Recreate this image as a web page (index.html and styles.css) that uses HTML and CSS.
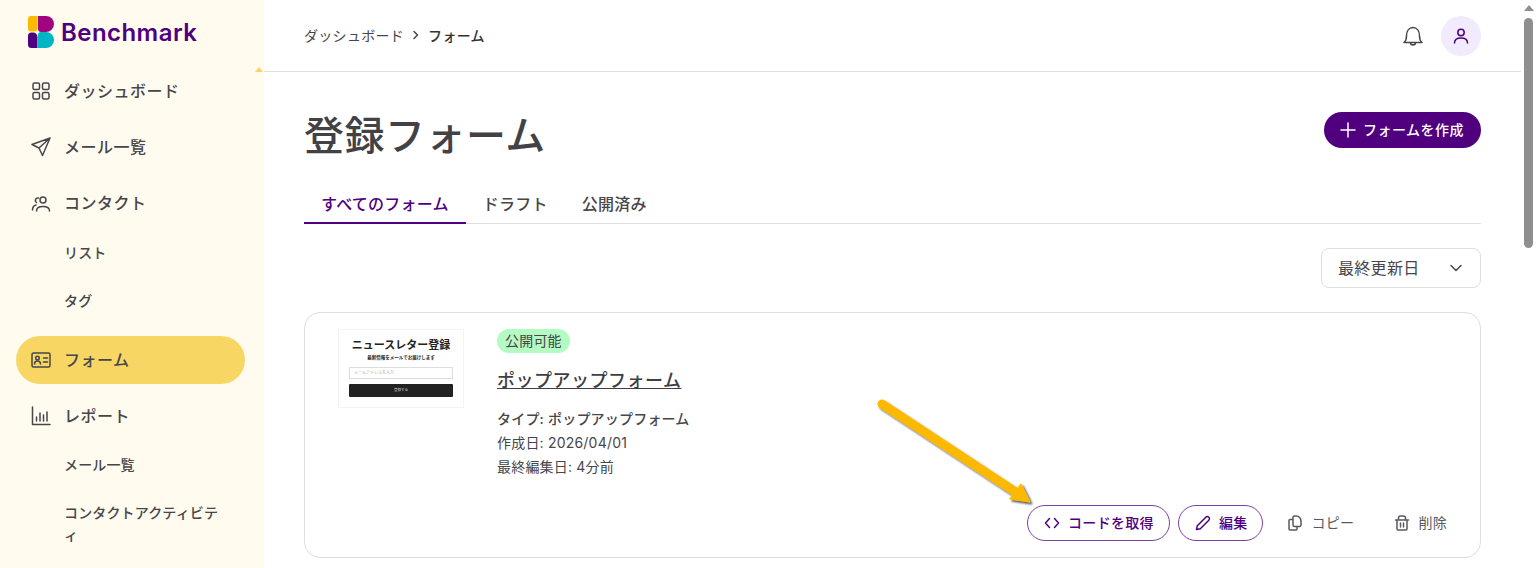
FILE: index.html
```html
<!DOCTYPE html>
<html lang="ja">
<head>
    <meta charset="UTF-8">
    <meta name="viewport" content="width=device-width, initial-scale=1.0">
    <title>登録フォーム</title>
    <link rel="stylesheet" href="styles.css">
</head>
<body>
    <div class="app">
        <aside class="sidebar">
            <div class="logo">
                <svg class="logo-mark" width="26" height="32" viewBox="0 0 26 32">
                    <path d="M0 3a3 3 0 0 1 3-3h6.500v12a3.500 3.500 0 0 1-3.500 3.500H3a3 3 0 0 1-3-3z" fill="#fdb900"/>
                    <path d="M10 0h8a8 8 0 0 1 0 16h-5a3 3 0 0 1-3-3z" fill="#a0047f"/>
                    <path d="M0 20a3.500 3.500 0 0 1 3.500-3.500h1.500a4.500 4.500 0 0 1 4.500 4.500v11H3.500A3.500 3.500 0 0 1 0 28.500z" fill="#50007f"/>
                    <path d="M13 16h5a8 8 0 0 1 0 16h-8V19a3 3 0 0 1 3-3z" fill="#00b5c4"/>
                </svg>
                <span class="logo-text">Benchmark</span>
            </div>
            <span class="sidebar-notch"></span>
            <nav class="nav">
                <a class="nav-item">
                    <svg class="icon" viewBox="0 0 20 20"><rect x="2" y="2" width="6.500" height="6.500" rx="1.500"/><rect x="11.500" y="2" width="6.500" height="6.500" rx="1.500"/><rect x="2" y="11.500" width="6.500" height="6.500" rx="1.500"/><rect x="11.500" y="11.500" width="6.500" height="6.500" rx="1.500"/></svg>
                    ダッシュボード
                </a>
                <a class="nav-item">
                    <svg class="icon" viewBox="0 0 20 20"><path d="M19 1 1 7.500l7 3.500 3.500 7.500zM19 1 8 11"/></svg>
                    メール一覧
                </a>
                <a class="nav-item">
                    <svg class="icon" viewBox="0 0 20 20"><circle cx="12" cy="7" r="3"/><path d="M5.500 18c0-3 2.500-4.500 6.500-4.500s6.500 1.500 6.500 4.500M7.500 5a2.500 2.500 0 0 0-2 4.500M1.500 17c0-3 1.500-4.500 3.500-5"/></svg>
                    コンタクト
                </a>
                <a class="nav-sub">リスト</a>
                <a class="nav-sub">タグ</a>
                <a class="nav-item nav-active">
                    <svg class="icon" viewBox="0 0 20 20"><rect x="1" y="3" width="18" height="14" rx="1.500"/><circle cx="6.500" cy="8" r="1.800"/><path d="M3.500 14c0-2 1.300-3 3-3s3 1 3 3M12.500 8h4M12.500 12h4"/></svg>
                    フォーム
                </a>
                <a class="nav-item">
                    <svg class="icon" viewBox="0 0 20 20"><path d="M1.500 1v17.500h17.500M5.500 15v-4M9 15V7M12.500 15v-6M16 15V6"/></svg>
                    レポート
                </a>
                <a class="nav-sub">メール一覧</a>
                <a class="nav-sub">コンタクトアクティビティ</a>
            </nav>
        </aside>

        <main class="main">
            <header class="topbar">
                <div class="crumbs">
                    <span>ダッシュボード</span>
                    <svg class="crumb-sep" viewBox="0 0 8 10"><path d="M2 1.500 5.500 5 2 8.500"/></svg>
                    <b>フォーム</b>
                </div>
                <div class="top-actions">
                    <svg class="bell" viewBox="0 0 24 24"><path d="M3 18.500c2-1.500 2.500-3 2.500-6.500 0-5 2.500-8.500 6.500-8.500s6.500 3.500 6.500 8.500c0 3.500.5 5 2.500 6.500zM9.500 18.500a2.500 2.500 0 0 0 5 0"/></svg>
                    <span class="avatar">
                        <svg viewBox="0 0 20 20"><circle cx="10" cy="6.500" r="3.200"/><path d="M3.500 17c0-3.500 3-5 6.500-5s6.500 1.500 6.500 5"/></svg>
                    </span>
                </div>
            </header>

            <section class="content">
                <div class="title-row">
                    <h1>登録フォーム</h1>
                    <button class="create-btn">
                        <svg viewBox="0 0 16 16"><path d="M8 1v14M1 8h14"/></svg>
                        フォームを作成
                    </button>
                </div>

                <div class="tabs">
                    <a class="tab tab-active">すべてのフォーム</a>
                    <a class="tab">ドラフト</a>
                    <a class="tab">公開済み</a>
                </div>

                <div class="sort-row">
                    <div class="sort-select">
                        最終更新日
                        <svg viewBox="0 0 14 14"><path d="M2 4.500 7 9.500l5-5"/></svg>
                    </div>
                </div>

                <article class="card">
                    <div class="card-top">
                        <div class="thumb">
                            <div class="thumb-title">ニュースレター登録</div>
                            <div class="thumb-sub">最新情報をメールでお届けします</div>
                            <div class="thumb-input">メールアドレスを入力</div>
                            <div class="thumb-btn">登録する</div>
                        </div>
                        <div class="card-info">
                            <span class="badge">公開可能</span>
                            <a class="card-name">ポップアップフォーム</a>
                            <p class="meta meta-type">タイプ: ポップアップフォーム</p>
                            <p class="meta">作成日: 2026/04/01</p>
                            <p class="meta">最終編集日: 4分前</p>
                        </div>
                    </div>
                    <div class="card-actions">
                        <button class="btn-outline">
                            <svg viewBox="0 0 16 16"><path d="M5.500 3.500 1.500 8l4 4.500M10.500 3.500l4 4.500-4 4.500"/></svg>
                            コードを取得
                        </button>
                        <button class="btn-outline">
                            <svg viewBox="0 0 16 16"><path d="M1.500 14.500l.8-3.800 8.500-8.500a1.800 1.800 0 0 1 3 3l-8.500 8.500z"/></svg>
                            編集
                        </button>
                        <button class="btn-plain">
                            <svg viewBox="0 0 16 16"><path d="M6 4.500H3a1 1 0 0 0-1 1V14a1 1 0 0 0 1 1h6a1 1 0 0 0 1-1v-2.500M6 2.500a1.500 1.500 0 0 1 1.500-1.500h1.800c2.500 0 4.700 2.200 4.700 5v4a1.500 1.500 0 0 1-1.500 1.500H7.500A1.500 1.500 0 0 1 6 10z"/></svg>
                            コピー
                        </button>
                        <button class="btn-plain">
                            <svg viewBox="0 0 16 16"><path d="M1.500 5h13M3 5v9a1 1 0 0 0 1 1h8a1 1 0 0 0 1-1V5M4.500 5V3a2 2 0 0 1 2-2h3a2 2 0 0 1 2 2v2M6.500 8v4M9.500 8v4"/></svg>
                            削除
                        </button>
                    </div>
                </article>
            </section>
        </main>

        <div class="scrollbar">
            <span class="scroll-up"></span>
            <span class="scroll-thumb"></span>
        </div>

        <!-- annotation arrow on top of the screenshot -->
        <svg class="arrow" width="180" height="120" viewBox="0 0 180 120">
            <defs>
                <filter id="arrowShadow" x="-10%" y="-10%" width="125%" height="130%">
                    <feDropShadow dx="2" dy="2" stdDeviation="1.200" flood-color="#000" flood-opacity="0.7"/>
                </filter>
            </defs>
            <g filter="url(#arrowShadow)">
                <path d="M8 10 146 101" stroke="#fdb900" stroke-width="9" stroke-linecap="round" fill="none"/>
                <path d="M147 90 156 108 136 105z" fill="#fdb900" stroke="#fdb900" stroke-width="1" stroke-linejoin="round"/>
            </g>
        </svg>
    </div>
</body>
</html>
```

FILE: styles.css
```css
* {
    box-sizing: border-box;
}
html, body {
    margin: 0;
    padding: 0;
    height: 100%;
    overflow: hidden;
}
body {
    font-family: Inter, "Noto Sans CJK JP", "Noto Sans", sans-serif;
    color: #47464b;
    background-color: #fff;
}
p {
    margin: 0;
}
button {
    font-family: inherit;
    background: none;
    border: none;
    cursor: pointer;
}
svg {
    fill: none;
    stroke: currentColor;
    stroke-width: 1.500;
    stroke-linecap: round;
    stroke-linejoin: round;
    flex-shrink: 0;
}

.app {
    position: relative;
    display: flex;
    height: 568px;
    overflow: hidden;
}

/* Sidebar */
.sidebar {
    position: relative;
    width: 264px;
    flex-shrink: 0;
    background-color: #fffbef;
    padding: 16px 19px 0 16px;
}
.logo {
    display: flex;
    align-items: center;
    gap: 7px;
    height: 32px;
    padding-left: 12px;
}
.logo-mark {
    stroke: none;
}
.logo-text {
    font-size: 24px;
    font-weight: 600;
    letter-spacing: 0.450px;
    color: #50007f;
}
.sidebar-notch {
    position: absolute;
    top: 67px;
    left: 255px;
    border-left: 4px solid transparent;
    border-right: 4px solid transparent;
    border-bottom: 5px solid #f8d664;
}
.nav {
    display: flex;
    flex-direction: column;
    margin-top: 19px;
}
.nav-item {
    display: flex;
    align-items: center;
    gap: 13px;
    height: 48px;
    margin-bottom: 8px;
    padding: 0 0 2px 15px;
    border-radius: 24px;
    font-size: 16px;
    font-weight: 500;
    letter-spacing: 0.500px;
}
.nav-item .icon {
    width: 20px;
    height: 20px;
    margin-top: 2px;
}
.nav-active {
    background-color: #f8d664;
    margin-top: 11px;
}
.nav-sub {
    display: flex;
    align-items: center;
    min-height: 48px;
    padding: 13px 24px 13px 48px;
    font-size: 14px;
    font-weight: 500;
    letter-spacing: 0.150px;
    line-height: 22px;
}
.nav-item + .nav-sub {
    margin-top: -6px;
}
.nav-active + .nav-item + .nav-sub {
    margin-top: -7px;
}

/* Main column */
.main {
    flex: 1;
    min-width: 0;
}
.topbar {
    display: flex;
    align-items: center;
    justify-content: space-between;
    height: 72px;
    padding: 0 40px;
    border-bottom: 1px solid #dedede;
}
.crumbs {
    display: flex;
    align-items: center;
    gap: 8px;
    padding-bottom: 1px;
    font-size: 14px;
    letter-spacing: 0.300px;
}
.crumbs b {
    font-weight: 500;
    color: #333;
}
.crumb-sep {
    width: 8px;
    height: 10px;
}
.top-actions {
    display: flex;
    align-items: center;
    gap: 16px;
}
.bell {
    width: 24px;
    height: 24px;
}
.avatar {
    display: flex;
    align-items: center;
    justify-content: center;
    width: 40px;
    height: 40px;
    border-radius: 50%;
    background-color: #f1ebfd;
    color: #50007f;
}
.avatar svg {
    width: 20px;
    height: 20px;
}

.content {
    padding: 0 40px;
}
.title-row {
    display: flex;
    align-items: center;
    justify-content: space-between;
    height: 112px;
    padding-top: 16px;
    padding-bottom: 12px;
}
h1 {
    margin: 12px 0 0;
    font-size: 40px;
    font-weight: 500;
    letter-spacing: 0.500px;
    line-height: 60px;
    color: #424146;
}
.create-btn {
    display: flex;
    align-items: center;
    gap: 7px;
    height: 36px;
    padding: 0 17px 2px 16px;
    border-radius: 18px;
    background-color: #50007f;
    color: #fff;
    font-size: 14px;
    font-weight: 500;
    letter-spacing: 0.500px;
}
.create-btn svg {
    width: 16px;
    height: 16px;
    margin-top: 2px;
}

.tabs {
    display: flex;
    height: 40px;
    border-bottom: 1px solid #dedede;
}
.tab {
    padding: 0 17px;
    font-size: 16px;
    font-weight: 500;
    letter-spacing: 0.250px;
    line-height: 40px;
    height: 40px;
}
.tab-active {
    color: #50007f;
    border-bottom: 2px solid #50007f;
}

.sort-row {
    display: flex;
    justify-content: flex-end;
    margin-top: 24px;
}
.sort-select {
    display: flex;
    align-items: center;
    justify-content: space-between;
    width: 160px;
    height: 40px;
    padding: 0 17px 2px 16px;
    border: 1px solid #dedede;
    border-radius: 8px;
    font-size: 16px;
    letter-spacing: 0.300px;
}
.sort-select svg {
    width: 14px;
    height: 14px;
    margin-top: 2px;
}

/* Form card */
.card {
    margin-top: 24px;
    height: 246px;
    padding: 16px 17px 0 33px;
    border: 1px solid #dedede;
    border-radius: 16px;
}
.card-top {
    display: flex;
    gap: 33px;
    height: 176px;
}
.thumb {
    width: 126px;
    height: 79px;
    padding: 7px 10px 0;
    border: 1px solid #f4f4f4;
    text-align: center;
    color: #222;
}
.thumb-title {
    font-size: 11px;
    font-weight: 700;
    line-height: 16px;
    white-space: nowrap;
}
.thumb-sub {
    font-size: 4.500px;
    font-weight: 700;
    line-height: 8px;
    margin-top: 1px;
    white-space: nowrap;
}
.thumb-input {
    height: 12px;
    margin-top: 5px;
    padding-left: 4px;
    border: 1px solid #ddd;
    font-size: 4px;
    line-height: 10px;
    color: #aaa;
    text-align: left;
}
.thumb-btn {
    height: 13px;
    margin-top: 5px;
    border-radius: 1px;
    background-color: #222;
    color: #ddd;
    font-size: 3.500px;
    line-height: 13px;
}
.card-info {
    display: flex;
    flex-direction: column;
    align-items: flex-start;
}
.badge {
    height: 24px;
    padding: 0 8px;
    border-radius: 12px;
    background-color: #b3fbc2;
    font-size: 14px;
    line-height: 24px;
    letter-spacing: 0.200px;
}
.card-name {
    margin-top: 14px;
    font-size: 18px;
    font-weight: 500;
    line-height: 27px;
    letter-spacing: 0.500px;
    text-decoration: underline;
    color: #3f3e43;
}
.meta {
    font-size: 14px;
    line-height: 24px;
    letter-spacing: 0.200px;
}
.meta-type {
    margin-top: 13px;
    font-weight: 500;
}
.card-actions {
    display: flex;
    justify-content: flex-end;
    align-items: center;
    gap: 8px;
}
.card-actions svg {
    width: 16px;
    height: 16px;
    margin-top: 2px;
}
.btn-outline, .btn-plain {
    display: flex;
    align-items: center;
    gap: 8px;
    height: 36px;
    padding: 0 16px 2px;
    border-radius: 18px;
    font-size: 14px;
    font-weight: 500;
    letter-spacing: 0.300px;
}
.btn-outline {
    padding-right: 15px;
    border: 1px solid #7d3fa8;
    color: #50007f;
}
.btn-plain {
    font-weight: 400;
    color: #5a5a5e;
}

/* Fake browser scrollbar */
.scrollbar {
    width: 15px;
    flex-shrink: 0;
    position: relative;
    background-color: #fff;
}
.scroll-up {
    position: absolute;
    top: 5px;
    left: 3px;
    border-left: 5px solid transparent;
    border-right: 5px solid transparent;
    border-bottom: 6px solid #8f8f8f;
}
.scroll-thumb {
    position: absolute;
    top: 18px;
    left: 3px;
    width: 9px;
    height: 230px;
    border-radius: 5px;
    background-color: #8f8f8f;
}

.arrow {
    position: absolute;
    top: 394px;
    left: 874px;
    overflow: visible;
    stroke: none;
}
```
